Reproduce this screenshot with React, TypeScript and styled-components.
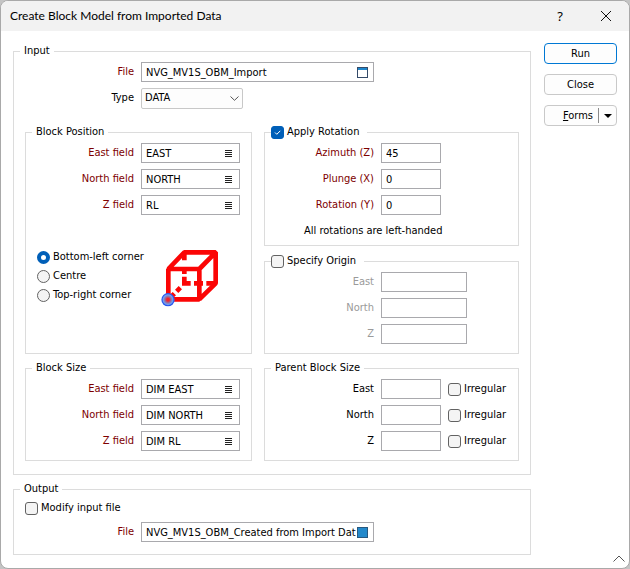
import React, { useState } from "react";
import styled, { createGlobalStyle, css } from "styled-components";

const GlobalStyle = createGlobalStyle`
  *, *::before, *::after { box-sizing: border-box; }
  body {
    margin: 0;
    background: #c4c4c4;
    color: #000;
    font: 11px/14px "DejaVu Sans Condensed", Tahoma, sans-serif;
  }
  input, select, button { font: inherit; color: inherit; margin: 0; }
`;

const Dialog = styled.main`
  display: flex;
  flex-direction: column;
  min-height: 100vh;
  overflow: hidden;
  border: 1px solid #a9a9a9;
  border-radius: 8px;
  background: #fff;
`;

const TitleBar = styled.header`
  display: flex;
  align-items: center;
  height: 30px;
  padding-left: 9px;
  background: #f2f2f2;
`;

const Title = styled.h1`
  flex: 1;
  margin: 0;
  font: 12px/16px Lato, "Segoe UI", sans-serif;
`;

const TitleButton = styled.button`
  display: grid;
  place-items: center;
  width: 46px;
  height: 30px;
  padding: 0;
  border: 0;
  background: none;
  font: 13px/16px "Noto Sans", sans-serif;
`;

const Body = styled.div`
  display: flex;
  align-items: flex-start;
  gap: 13px;
  padding: 12px 12px 0;
`;

const Sections = styled.div`
  display: flex;
  flex: 1;
  flex-direction: column;
  gap: 7px;
  min-width: 0;
  padding-top: 1px;
`;

const Group = styled.fieldset`
  min-width: 0;
  margin: 0;
  padding: 0;
  border: 1px solid #dcdcdc;
`;

const Legend = styled.legend`
  height: 14px;
  margin-left: 6px;
  padding: 0 4px;
  white-space: nowrap;
`;

const CheckLegend = styled(Legend)`
  padding: 0 8px 0 0;
`;

const SectionContent = styled.div`
  padding: 4px 11px 13px;
`;

const Rows = styled.div`
  display: flex;
  flex-direction: column;
  gap: 6px;
`;

const GroupRows = styled(Rows)`
  padding: 4px 0 9px;
`;

const FormRow = styled.div`
  display: flex;
  align-items: center;
  gap: 7px;
  height: 20px;
`;

type Tone = "required" | "normal" | "muted";
const tones: Record<Tone, string> = { required: "#7d0000", normal: "#000", muted: "#9a9a9a" };

const FieldLabel = styled.label<{ $tone: Tone; $width: number }>`
  flex: none;
  width: ${(p) => p.$width}px;
  text-align: right;
  white-space: nowrap;
  color: ${(p) => tones[p.$tone]};
`;

const Box = styled.div<{ $width: number }>`
  display: flex;
  align-items: center;
  flex: none;
  width: ${(p) => p.$width}px;
  height: 20px;
  border: 1px solid #a9a9ad;
  background: #fff;
`;

const TextInput = styled.input`
  flex: 1;
  min-width: 0;
  height: 18px;
  padding: 0 0 0 4px;
  border: 0;
  outline: 0;
  background: none;
`;

const BoxButton = styled.button`
  display: flex;
  align-items: center;
  flex: none;
  height: 18px;
  padding: 0 5px 0 0;
  border: 0;
  background: none;
`;

const SelectWrap = styled.div`
  position: relative;
  width: 102px;
  height: 21px;
`;

const Select = styled.select`
  width: 100%;
  height: 21px;
  padding: 0 20px 0 3px;
  appearance: none;
  border: 1px solid #c8c8c8;
  border-radius: 2px;
  background: #fdfdfd;
`;

const SelectArrow = styled.svg`
  position: absolute;
  top: 8px;
  right: 4px;
  pointer-events: none;
`;

const Columns = styled.div`
  display: grid;
  grid-template-columns: 227fr 255fr;
  gap: 7px 12px;
  margin-top: 17px;
`;

const Stack = styled.div`
  display: flex;
  flex-direction: column;
  gap: 8px;
`;

const CheckLabel = styled.label`
  display: inline-flex;
  align-items: center;
  gap: 3px;
  height: 14px;
  white-space: nowrap;
`;

const mark = css`
  flex: none;
  width: 13px;
  height: 13px;
  appearance: none;
  border: 1px solid #626262;
  background: #f4f4f4;
`;

const CheckBox = styled.input.attrs({ type: "checkbox" })`
  ${mark}
  border-radius: 3px;
  &:checked {
    border-color: #005fb8;
    background: #005fb8
      url("data:image/svg+xml,%3Csvg xmlns='http://www.w3.org/2000/svg' viewBox='0 0 11 11'%3E%3Cpath d='M3 5.5 4.8 7.3 8.3 3.8' fill='none' stroke='white'/%3E%3C/svg%3E");
  }
`;

const Radio = styled.input.attrs({ type: "radio" })`
  ${mark}
  border-radius: 50%;
  &:checked {
    border: 4px solid #005fb8;
    background: #fff;
  }
`;

const CornerPicker = styled.div`
  display: grid;
  grid-template-columns: 123px auto;
  justify-content: start;
  margin-top: 24px;
  padding-left: 11px;
`;

const RadioList = styled.div`
  display: flex;
  flex-direction: column;
  gap: 5px;
  padding-top: 2px;
`;

const Note = styled.p`
  margin: 3px 0 -2px;
  padding-left: 39px;
  white-space: nowrap;
`;

const OutputContent = styled.div`
  display: flex;
  flex-direction: column;
  align-items: flex-start;
  gap: 7px;
  padding: 5px 11px 12px;
`;

const Actions = styled.div`
  display: flex;
  flex: none;
  flex-direction: column;
  gap: 10px;
  width: 73px;
`;

const ActionButton = styled.button<{ $primary?: boolean }>`
  height: 21px;
  padding: 0;
  border: 1px solid ${(p) => (p.$primary ? "#0078d4" : "#c9c9c9")};
  border-radius: 4px;
  background: #fdfdfd;
`;

const SplitButton = styled.div`
  display: flex;
  align-items: center;
  height: 21px;
  border: 1px solid #c9c9c9;
  border-radius: 4px;
  background: #fdfdfd;
`;

const SplitMain = styled.button`
  flex: 1;
  height: 15px;
  padding: 0 5px 0 0;
  border: 0;
  border-right: 1px solid #8a8a8a;
  background: none;
  line-height: 14px;
  text-align: right;
`;

const SplitArrow = styled(BoxButton)`
  justify-content: center;
  width: 17px;
  padding: 0;
`;

const Footer = styled.footer`
  display: flex;
  justify-content: flex-end;
  padding-right: 4px;
`;

const CollapseButton = styled.button`
  display: grid;
  place-items: center;
  width: 12px;
  height: 7px;
  padding: 0;
  border: 0;
  background: none;
`;

function ListIcon() {
  return (
    <svg width="9" height="8" viewBox="0 0 9 8" stroke="#222" aria-hidden>
      <path d="M0 1.5h7M0 3.5h7M0 5.5h7M0 7.5h7" />
    </svg>
  );
}

function BrowseIcon() {
  return (
    <svg width="11" height="11" viewBox="0 0 11 11" aria-hidden>
      <rect x=".5" y=".5" width="10" height="10" fill="#fff" stroke="#344a68" />
      <rect x="1" y="1" width="9" height="2" fill="#1f87cc" />
    </svg>
  );
}

function SaveIcon() {
  return (
    <svg width="11" height="11" viewBox="0 0 11 11" aria-hidden>
      <rect x=".5" y=".5" width="10" height="10" fill="#2389cb" stroke="#27587f" />
    </svg>
  );
}

function CubeIcon() {
  return (
    <svg width="60" height="60" viewBox="15 24 180 180" role="img" aria-label="Block corner">
      <defs>
        <radialGradient id="corner">
          <stop offset="0.2" stopColor="#f5202a" />
          <stop offset="0.45" stopColor="#9a6a9c" />
          <stop offset="0.72" stopColor="#6ea2f4" />
          <stop offset="0.9" stopColor="#2450ee" />
          <stop offset="1" stopColor="#3a68f4" />
        </radialGradient>
      </defs>
      <g fill="none" stroke="#fb0505" strokeWidth="14">
        <path d="M40 87H133V178H40ZM40 87 88 37H182V130L133 178M133 87 182 37" strokeLinejoin="bevel" />
        <path d="M88 37V61M88 81V102M88 110V130H107M117 130H144M154 130H182" />
        <path d="M76 143 65 154M58 161 45 174" />
      </g>
      <circle cx="39" cy="179" r="20" fill="url(#corner)" />
    </svg>
  );
}

type FieldProps = {
  id: string;
  label: string;
  value?: string;
  tone?: Tone;
  width?: number;
  labelWidth?: number;
  icon?: React.ReactNode;
  disabled?: boolean;
  children?: React.ReactNode;
};

function Field({ id, label, value = "", tone = "required", width = 99, labelWidth = 109, icon, disabled, children }: FieldProps) {
  return (
    <FormRow>
      <FieldLabel htmlFor={id} $tone={tone} $width={labelWidth}>{label}</FieldLabel>
      <Box $width={width}>
        <TextInput id={id} type="text" defaultValue={value} disabled={disabled} />
        {icon && <BoxButton type="button" aria-label={`Choose ${label}`}>{icon}</BoxButton>}
      </Box>
      {children}
    </FormRow>
  );
}

function Check({ label, ...rest }: { label: string } & React.InputHTMLAttributes<HTMLInputElement>) {
  return (
    <CheckLabel>
      <CheckBox {...rest} />
      {label}
    </CheckLabel>
  );
}

const axes = ["East", "North", "Z"];
const corners = ["Bottom-left corner", "Centre", "Top-right corner"];
const positions = ["EAST", "NORTH", "RL"];
const rotations = [["Azimuth (Z)", "45"], ["Plunge (X)", "0"], ["Rotation (Y)", "0"]];

export default function App() {
  const [rotate, setRotate] = useState(true);
  const [origin, setOrigin] = useState(false);

  return (
    <>
      <GlobalStyle />
      <Dialog>
        <TitleBar>
          <Title>Create Block Model from Imported Data</Title>
          <TitleButton type="button" aria-label="Help">?</TitleButton>
          <TitleButton type="button" aria-label="Close window">
            <svg width="10" height="10" viewBox="0 0 10 10" stroke="#111" aria-hidden>
              <path d="M0 0 10 10M10 0 0 10" />
            </svg>
          </TitleButton>
        </TitleBar>
        <Body>
          <Sections>
            <Group>
              <Legend>Input</Legend>
              <SectionContent>
                <Rows>
                  <Field id="in-file" label="File" value="NVG_MV1S_OBM_Import" width={233} icon={<BrowseIcon />} />
                  <FormRow>
                    <FieldLabel htmlFor="in-type" $tone="normal" $width={109}>Type</FieldLabel>
                    <SelectWrap>
                      <Select id="in-type" defaultValue="DATA">
                        <option>DATA</option>
                      </Select>
                      <SelectArrow width="9" height="5" viewBox="0 0 9 5" fill="none" stroke="#555" aria-hidden>
                        <path d="M.5 .5 4.5 4.3 8.5 .5" />
                      </SelectArrow>
                    </SelectWrap>
                  </FormRow>
                </Rows>
                <Columns>
                  <Group>
                    <Legend>Block Position</Legend>
                    <GroupRows>
                      {axes.map((a, i) => (
                        <Field key={a} id={`pos-${a}`} label={`${a} field`} value={positions[i]} labelWidth={108} icon={<ListIcon />} />
                      ))}
                    </GroupRows>
                    <CornerPicker>
                      <RadioList>
                        {corners.map((c, i) => (
                          <CheckLabel key={c}>
                            <Radio name="corner" defaultChecked={i === 0} />
                            {c}
                          </CheckLabel>
                        ))}
                      </RadioList>
                      <CubeIcon />
                    </CornerPicker>
                  </Group>
                  <Stack>
                    <Group>
                      <CheckLegend>
                        <Check label="Apply Rotation" checked={rotate} onChange={(e) => setRotate(e.target.checked)} />
                      </CheckLegend>
                      <GroupRows>
                        {rotations.map(([l, v]) => (
                          <Field key={l} id={`rot-${l[0]}`} label={l} value={v} width={60} disabled={!rotate} />
                        ))}
                        <Note>All rotations are left-handed</Note>
                      </GroupRows>
                    </Group>
                    <Group>
                      <CheckLegend>
                        <Check label="Specify Origin" checked={origin} onChange={(e) => setOrigin(e.target.checked)} />
                      </CheckLegend>
                      <GroupRows>
                        {axes.map((a) => (
                          <Field key={a} id={`org-${a}`} label={a} tone={origin ? "normal" : "muted"} width={86} disabled={!origin} />
                        ))}
                      </GroupRows>
                    </Group>
                  </Stack>
                  <Group>
                    <Legend>Block Size</Legend>
                    <GroupRows>
                      {axes.map((a, i) => (
                        <Field key={a} id={`size-${a}`} label={`${a} field`} value={`DIM ${positions[i]}`} labelWidth={108} icon={<ListIcon />} />
                      ))}
                    </GroupRows>
                  </Group>
                  <Group>
                    <Legend>Parent Block Size</Legend>
                    <GroupRows>
                      {axes.map((a) => (
                        <Field key={a} id={`parent-${a}`} label={a} tone="normal" width={60}>
                          <Check label="Irregular" />
                        </Field>
                      ))}
                    </GroupRows>
                  </Group>
                </Columns>
              </SectionContent>
            </Group>
            <Group>
              <Legend>Output</Legend>
              <OutputContent>
                <Check label="Modify input file" />
                <Field id="out-file" label="File" value="NVG_MV1S_OBM_Created from Import Dat" width={233} icon={<SaveIcon />} />
              </OutputContent>
            </Group>
          </Sections>
          <Actions>
            <ActionButton type="button" $primary>Run</ActionButton>
            <ActionButton type="button">Close</ActionButton>
            <SplitButton>
              <SplitMain type="button"><u>F</u>orms</SplitMain>
              <SplitArrow type="button" aria-label="More forms">
                <svg width="8" height="4" viewBox="0 0 8 4" aria-hidden><path d="M0 0H8L4 4Z" /></svg>
              </SplitArrow>
            </SplitButton>
          </Actions>
        </Body>
        <Footer>
          <CollapseButton type="button" aria-label="Collapse">
            <svg width="12" height="7" viewBox="0 0 12 7" fill="none" stroke="#555" aria-hidden>
              <path d="M.5 6.5 6 1 11.5 6.5" />
            </svg>
          </CollapseButton>
        </Footer>
      </Dialog>
    </>
  );
}
